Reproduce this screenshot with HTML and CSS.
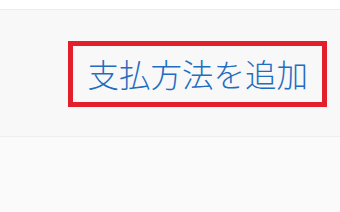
FILE: index.html
```html
<!DOCTYPE html>
<html lang="ja">
<head>
<meta charset="utf-8">
<link rel="stylesheet" href="styles.css">
</head>
<body>
<div class="top"></div>
<section class="panel">
  <a class="add-link">支払方法を追加</a>
</section>
<div class="rest"></div>
</body>
</html>
```

FILE: styles.css
```css
html, body {
  margin: 0;
  padding: 0;
  background: #fafafa;
}
.top {
  height: 9px;
  background: #ffffff;
  border-bottom: 1px solid #ececec;
}
.panel {
  height: 127px;
  background: #f8f8f8;
  border-bottom: 1px solid #eeeeee;
  display: flex;
  justify-content: flex-end;
  align-items: flex-start;
  padding: 31px 13px 0 0;
  box-sizing: border-box;
}
.add-link {
  display: flex;
  align-items: center;
  height: 56px;
  padding: 0 14px;
  border: 5px solid #e21f2a;
  color: #1f6cc0;
  font-family: "Noto Sans CJK JP", sans-serif;
  font-weight: 300;
  font-size: 31.5px;
  line-height: 1;
  white-space: nowrap;
}
.rest {
  height: 75px;
  background: #fafafa;
}
```
